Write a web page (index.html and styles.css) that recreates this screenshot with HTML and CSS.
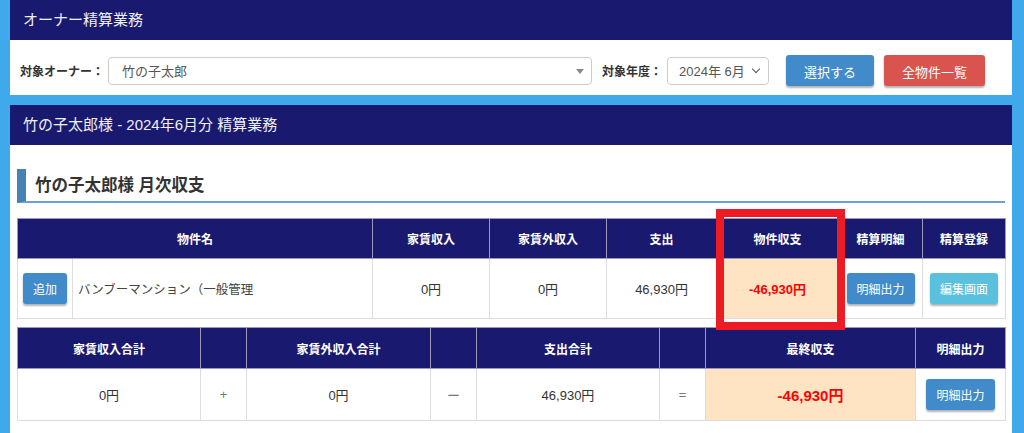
FILE: index.html
```html
<!DOCTYPE html>
<html lang="ja">
<head>
  <meta charset="UTF-8">
  <meta name="viewport" content="width=device-width, initial-scale=1.0">
  <title>オーナー精算業務</title>
  <link rel="stylesheet" href="styles.css">
</head>
<body>
  <div class="panel">
    <div class="panel-header">オーナー精算業務</div>
    <div class="panel-body search-row">
      <span class="field-label owner-label">対象オーナー：</span>
      <div class="select owner-select">
        <span>竹の子太郎</span>
        <span class="caret"></span>
      </div>
      <span class="field-label year-label">対象年度：</span>
      <div class="select year-select">
        <span>2024年 6月</span>
        <span class="chevron"></span>
      </div>
      <button class="btn btn-primary btn-large">選択する</button>
      <button class="btn btn-danger btn-large">全物件一覧</button>
    </div>
  </div>

  <div class="panel">
    <div class="panel-header">竹の子太郎様 - 2024年6月分 精算業務</div>
    <div class="panel-body detail-body">
      <h2 class="section-title">竹の子太郎様 月次収支</h2>

      <div class="tables">
        <table class="data-table">
          <colgroup>
            <col style="width:55px"><col style="width:300px"><col style="width:117px"><col style="width:117px">
            <col style="width:110px"><col style="width:122px"><col style="width:84px"><col style="width:83px">
          </colgroup>
          <thead>
            <tr>
              <th colspan="2">物件名</th>
              <th>家賃収入</th>
              <th>家賃外収入</th>
              <th>支出</th>
              <th>物件収支</th>
              <th>精算明細</th>
              <th>精算登録</th>
            </tr>
          </thead>
          <tbody>
            <tr class="row-property">
              <td class="cell-btn"><button class="btn btn-primary">追加</button></td>
              <td class="cell-name">バンブーマンション（一般管理</td>
              <td>0円</td>
              <td>0円</td>
              <td>46,930円</td>
              <td class="cell-total">-46,930円</td>
              <td><button class="btn btn-primary">明細出力</button></td>
              <td><button class="btn btn-info">編集画面</button></td>
            </tr>
          </tbody>
        </table>

        <table class="data-table summary-table">
          <colgroup>
            <col style="width:183px"><col style="width:46px"><col style="width:184px"><col style="width:46px">
            <col style="width:183px"><col style="width:46px"><col style="width:210px"><col style="width:90px">
          </colgroup>
          <thead>
            <tr>
              <th>家賃収入合計</th>
              <th></th>
              <th>家賃外収入合計</th>
              <th></th>
              <th>支出合計</th>
              <th></th>
              <th>最終収支</th>
              <th>明細出力</th>
            </tr>
          </thead>
          <tbody>
            <tr class="row-summary">
              <td>0円</td>
              <td class="cell-op">+</td>
              <td>0円</td>
              <td class="cell-op">ー</td>
              <td>46,930円</td>
              <td class="cell-op">=</td>
              <td class="cell-total cell-final">-46,930円</td>
              <td><button class="btn btn-primary">明細出力</button></td>
            </tr>
          </tbody>
        </table>

        <div class="highlight-box"></div>
      </div>
    </div>
  </div>
</body>
</html>
```

FILE: styles.css
```css
body {
  margin: 0;
  padding: 0 12px 0 10px;
  background-color: #3fa9ec;
  font-family: "Liberation Sans", "Noto Sans CJK JP", sans-serif;
  color: #333333;
}

.panel {
  background-color: #ffffff;
  margin-bottom: 10px;
}

.panel-header {
  height: 40px;
  line-height: 40px;
  padding-left: 13px;
  background-color: #191970;
  color: #f0f0f5;
  font-size: 15px;
}

.search-row {
  display: flex;
  align-items: center;
  height: 55px;
  padding: 6px 10px 0 10px;
  box-sizing: border-box;
}

.search-row > * {
  flex-shrink: 0;
}

.field-label {
  font-size: 12px;
  font-weight: bold;
  color: #333333;
  white-space: nowrap;
}

.owner-label {
  margin-right: 4px;
}

.year-label {
  margin-right: 5px;
}

.select {
  display: flex;
  align-items: center;
  justify-content: space-between;
  height: 28px;
  box-sizing: border-box;
  border: 1px solid #cccccc;
  border-radius: 4px;
  font-size: 13px;
  color: #555555;
  background-color: #ffffff;
}

.owner-select {
  width: 484px;
  padding: 0 7px 0 13px;
  margin-right: 10px;
}

.year-select {
  width: 102px;
  padding: 0 9px 0 11px;
  margin-right: 17px;
}

.caret {
  width: 0;
  height: 0;
  border-left: 4px solid transparent;
  border-right: 4px solid transparent;
  border-top: 5px solid #888888;
  margin-top: 2px;
}

.chevron {
  width: 5px;
  height: 5px;
  border-right: 1.5px solid #555555;
  border-bottom: 1.5px solid #555555;
  transform: rotate(45deg);
  margin-top: -4px;
}

.btn {
  border: none;
  border-radius: 3px;
  color: #ffffff;
  font-family: inherit;
  font-size: 12px;
  padding: 7px 10px;
  box-shadow: 0 2px 2px rgba(0, 0, 0, 0.3);
  cursor: pointer;
}

.btn-large {
  height: 31px;
  font-size: 13px;
  margin-right: 10px;
}

.btn-primary {
  background-color: #428bca;
}

.btn-primary.btn-large {
  width: 88px;
}

.btn-danger {
  background-color: #d9534f;
  width: 101px;
}

.btn-info {
  background-color: #5bc0de;
}

.detail-body {
  padding: 24px 7px 13px 7px;
}

.section-title {
  margin: 0 0 15px 0;
  height: 34px;
  line-height: 33px;
  box-sizing: border-box;
  padding-left: 9px;
  border-left: 9px solid #4682b4;
  border-bottom: 2px solid #6aa0d8;
  font-size: 16.5px;
  font-weight: bold;
  color: #333333;
}

.tables {
  position: relative;
}

.data-table {
  width: 988px;
  table-layout: fixed;
  border-collapse: collapse;
  font-size: 13px;
}

.data-table th {
  height: 39px;
  padding: 0;
  background-color: #191970;
  color: #ffffff;
  font-size: 12px;
  font-weight: bold;
  border: 1px solid #9a9ab8;
}

.data-table td {
  padding: 0;
  text-align: center;
  border: 1px solid #dddddd;
  color: #333333;
}

.row-property td {
  height: 59px;
}

.cell-btn {
  text-align: center;
}

.data-table td.cell-name {
  text-align: left;
  padding-left: 5px;
  font-size: 12.5px;
  color: #444444;
}

.data-table td.cell-total {
  background-color: #ffe4c4;
  color: #ff0000;
  font-weight: bold;
}

.data-table td.cell-final {
  font-size: 15px;
}

.summary-table {
  margin-top: 8px;
}

.summary-table th {
  height: 40px;
}

.row-summary td {
  height: 51px;
}

.data-table td.cell-op {
  color: #777777;
}

.highlight-box {
  position: absolute;
  left: 699px;
  top: -9px;
  width: 129px;
  height: 121px;
  box-sizing: border-box;
  border: 8px solid #ed1c24;
  z-index: 1;
}
```
